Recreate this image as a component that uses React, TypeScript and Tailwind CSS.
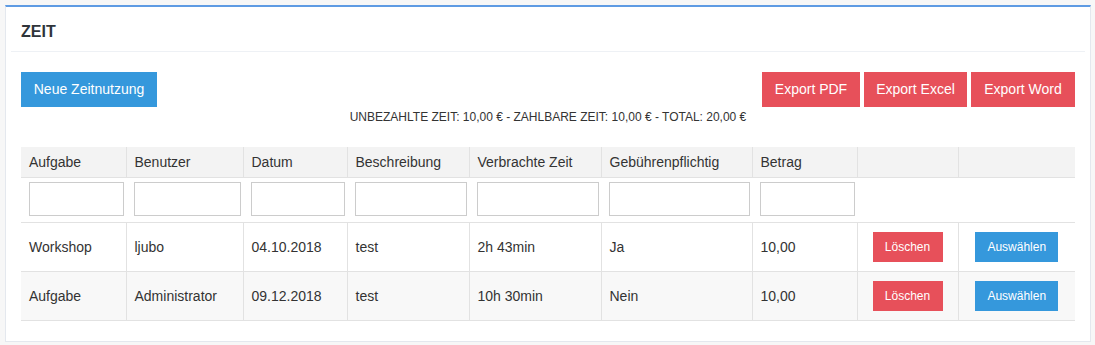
import React from "react";

const cols = [
  { label: "Aufgabe", w: 105, filter: true },
  { label: "Benutzer", w: 117, filter: true },
  { label: "Datum", w: 104, filter: true },
  { label: "Beschreibung", w: 122, filter: true },
  { label: "Verbrachte Zeit", w: 132, filter: true },
  { label: "Gebührenpflichtig", w: 151, filter: true },
  { label: "Betrag", w: 105, filter: true },
  { label: "", w: 101, filter: false },
  { label: "", w: 117, filter: false },
];

const rows = [
  ["Workshop", "ljubo", "04.10.2018", "test", "2h 43min", "Ja", "10,00"],
  ["Aufgabe", "Administrator", "09.12.2018", "test", "10h 30min", "Nein", "10,00"],
];

export default function App() {
  return (
    <div
      className="h-[345px] w-[1095px] bg-[#f7f7f7] pl-[5px] pt-[5px]"
      style={{ fontFamily: '"Liberation Sans", Arial, sans-serif' }}
    >
      <div className="h-[337px] w-[1086px] border border-[#e4e8ee] border-t-2 border-t-[#5e9be3] bg-white text-[#333]">
        <div className="mx-[5px] flex h-[45px] items-center border-b border-[#eef1f5] pl-[10px] pt-[6px]">
          <h2 className="text-[16px] font-bold leading-none text-[#2f353b]">ZEIT</h2>
        </div>
        <div className="px-[15px] pt-[20px]">
          <div className="flex items-start justify-between">
            <button className="h-[35px] w-[136px] bg-[#3598dc] text-[14px] text-white">Neue Zeitnutzung</button>
            <div className="flex gap-[4px]">
              <button className="h-[35px] w-[98px] bg-[#e7505a] text-[14px] text-white">Export PDF</button>
              <button className="h-[35px] w-[103px] bg-[#e7505a] text-[14px] text-white">Export Excel</button>
              <button className="h-[35px] w-[104px] bg-[#e7505a] text-[14px] text-white">Export Word</button>
            </div>
          </div>
          <div className="mt-[2px] text-center text-[12px] leading-[16px]">
            UNBEZAHLTE ZEIT: 10,00 € - ZAHLBARE ZEIT: 10,00 € - TOTAL: 20,00 €
          </div>
          <table className="mt-[22px] w-[1054px] table-fixed border-collapse text-[14px]">
            <colgroup>
              {cols.map((c, i) => (
                <col key={i} style={{ width: c.w }} />
              ))}
            </colgroup>
            <thead>
              <tr className="h-[30px] bg-[#f3f3f3]">
                {cols.map((c, i) => (
                  <th
                    key={i}
                    className={`border-b border-[#e2e2e2] px-[8px] pt-[1px] text-left font-normal ${
                      i > 0 ? "border-l" : ""
                    }`}
                  >
                    {c.label}
                  </th>
                ))}
              </tr>
              <tr className="h-[45px] bg-white">
                {cols.map((c, i) => (
                  <td key={i} className="border-b border-[#e2e2e2] pl-[8px] pr-[2px] pt-[4px] align-top">
                    {c.filter && (
                      <input className="block h-[34px] w-full border border-[#cccccc] bg-white outline-none" />
                    )}
                  </td>
                ))}
              </tr>
            </thead>
            <tbody>
              {rows.map((r, ri) => (
                <tr key={ri} className={`h-[49px] ${ri % 2 === 1 ? "bg-[#f8f8f8]" : "bg-white"}`}>
                  {r.map((v, i) => (
                    <td
                      key={i}
                      className={`border-b border-[#e2e2e2] px-[8px] pt-[2px] ${i > 0 ? "border-l" : ""}`}
                    >
                      {v}
                    </td>
                  ))}
                  <td className="border-b border-l border-[#e2e2e2] pt-[1px] text-center">
                    <button className="h-[30px] w-[70px] bg-[#e7505a] text-[12px] text-white">Löschen</button>
                  </td>
                  <td className="border-b border-l border-[#e2e2e2] pt-[1px] text-center">
                    <button className="h-[30px] w-[83px] bg-[#3598dc] text-[12px] text-white">Auswählen</button>
                  </td>
                </tr>
              ))}
            </tbody>
          </table>
        </div>
      </div>
    </div>
  );
}
